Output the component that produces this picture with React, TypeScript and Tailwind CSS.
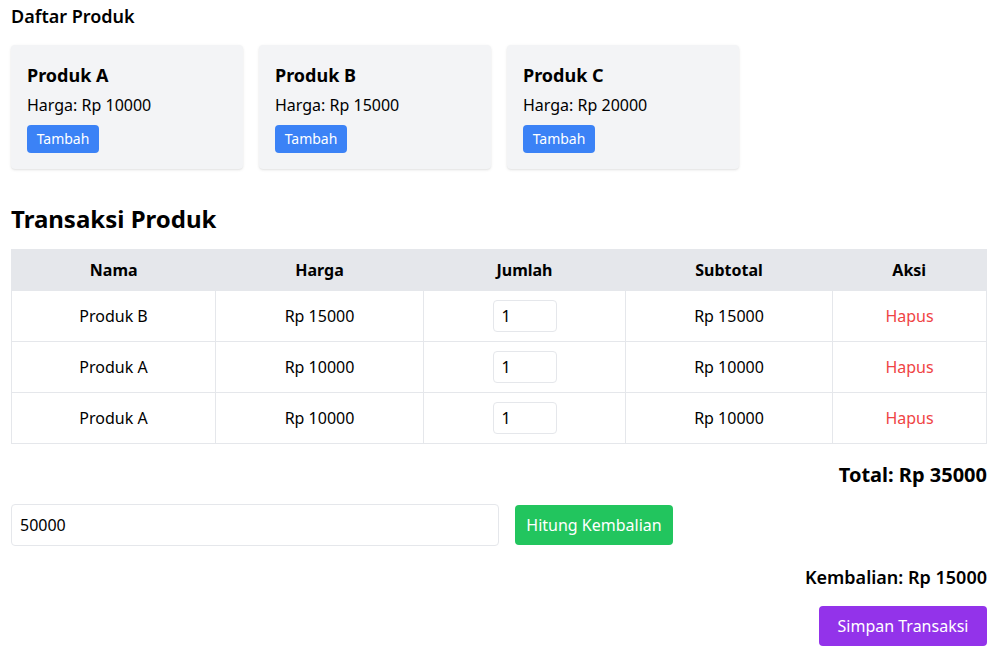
import React from "react";

const products = [
  { name: "Produk A", price: 10000 },
  { name: "Produk B", price: 15000 },
  { name: "Produk C", price: 20000 },
];

const rows = [
  { name: "Produk B", price: 15000 },
  { name: "Produk A", price: 10000 },
  { name: "Produk A", price: 10000 },
];

export default function App() {
  return (
    <div
      className="min-h-[651px] bg-white pl-[11px] pr-[9px] pt-[2px] text-black"
      style={{ fontFamily: '"Noto Sans", "Open Sans", sans-serif' }}
    >
      <h2 className="text-lg font-semibold leading-7">Daftar Produk</h2>
      <div className="mt-[15px] flex gap-4">
        {products.map((p) => (
          <div key={p.name} className="w-[232px] rounded bg-[#f3f4f6] p-4 shadow">
            <h3 className="text-lg font-bold leading-7">{p.name}</h3>
            <p className="mt-1 text-base leading-6">Harga: Rp {p.price}</p>
            <button className="mt-2 h-7 w-[72px] rounded bg-[#3b82f6] text-sm leading-5 text-white">
              Tambah
            </button>
          </div>
        ))}
      </div>
      <h2 className="mt-[34px] text-2xl font-bold leading-8">Transaksi Produk</h2>
      <table className="mt-[14px] w-full border-collapse border border-[#e5e7eb] text-base">
        <thead>
          <tr className="h-[41px] bg-[#e5e7eb]">
            <th className="w-[204px] font-bold">Nama</th>
            <th className="w-[208px] font-bold">Harga</th>
            <th className="w-[202px] font-bold">Jumlah</th>
            <th className="w-[207px] font-bold">Subtotal</th>
            <th className="font-bold">Aksi</th>
          </tr>
        </thead>
        <tbody>
          {rows.map((r, i) => (
            <tr key={i} className="h-[51px]">
              <td className="border border-[#e5e7eb] text-center">{r.name}</td>
              <td className="border border-[#e5e7eb] text-center">Rp {r.price}</td>
              <td className="border border-[#e5e7eb] text-center">
                <input
                  readOnly
                  value="1"
                  className="h-8 w-16 rounded border border-[#e5e7eb] px-2 align-middle"
                />
              </td>
              <td className="border border-[#e5e7eb] text-center">Rp {r.price}</td>
              <td className="border border-[#e5e7eb] text-center text-[#ef4444]">Hapus</td>
            </tr>
          ))}
        </tbody>
      </table>
      <div className="mt-[17px] text-right text-xl font-bold leading-7">Total: Rp 35000</div>
      <div className="mt-[15px] flex items-center gap-4">
        <input
          readOnly
          value="50000"
          className="h-[42px] w-[488px] rounded border border-[#e5e7eb] px-2"
        />
        <button className="h-10 w-[158px] rounded bg-[#22c55e] text-white">Hitung Kembalian</button>
      </div>
      <div className="mt-[17px] text-right text-lg font-semibold leading-7">Kembalian: Rp 15000</div>
      <div className="mt-[15px] flex justify-end">
        <button className="h-10 w-[168px] rounded bg-[#9333ea] text-white">Simpan Transaksi</button>
      </div>
    </div>
  );
}
